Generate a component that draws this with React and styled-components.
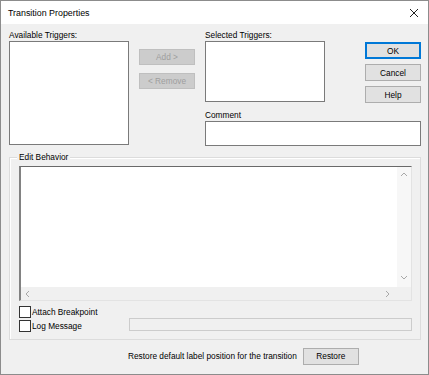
import React from 'react';
import styled, { createGlobalStyle } from 'styled-components';

const GlobalStyle = createGlobalStyle`
  html, body {
    margin: 0;
    padding: 0;
    background: #ffffff;
  }
  * {
    box-sizing: border-box;
  }
`;

function ChevronIcon({ dir }) {
    const paths = {
        up: 'M1 5 L4 2 L7 5',
        down: 'M1 2 L4 5 L7 2',
        left: 'M5 1 L2 4 L5 7',
        right: 'M2 1 L5 4 L2 7',
    };
    return (
        <svg width="8" height="8" viewBox="0 0 8 8">
            <path d={paths[dir]} fill="none" stroke="#a8a8a8" strokeWidth="1" />
        </svg>
    );
}

function App() {
    return (
        <Window>
            <GlobalStyle />
            <TitleBar>
                <span>Transition Properties</span>
                <CloseButton>
                    <svg width="10" height="10" viewBox="0 0 10 10">
                        <path d="M1 1 L9 9 M9 1 L1 9" stroke="#222" strokeWidth="1" />
                    </svg>
                </CloseButton>
            </TitleBar>
            <Body>
                <TopArea>
                    <Column width="120px">
                        <Label>Available Triggers:</Label>
                        <ListBox height="104px" />
                    </Column>
                    <ButtonColumn top="18px" gap="8px">
                        <Button disabled>Add &gt;</Button>
                        <Button disabled>&lt; Remove</Button>
                    </ButtonColumn>
                    <RightSide>
                        <RightRow>
                            <Column width="120px">
                                <Label>Selected Triggers:</Label>
                                <ListBox height="61px" />
                            </Column>
                            <ButtonColumn top="11px" gap="5px">
                                <Button primary tall>OK</Button>
                                <Button tall>Cancel</Button>
                                <Button tall>Help</Button>
                            </ButtonColumn>
                        </RightRow>
                        <CommentLabel>Comment</CommentLabel>
                        <ListBox height="25px" />
                    </RightSide>
                </TopArea>

                <Group>
                    <GroupTitle>Edit Behavior</GroupTitle>
                    <Editor>
                        <EditorMain>
                            <EditorText />
                            <VScroll>
                                <ChevronIcon dir="up" />
                                <ChevronIcon dir="down" />
                            </VScroll>
                        </EditorMain>
                        <HScroll>
                            <HTrack>
                                <ChevronIcon dir="left" />
                                <ChevronIcon dir="right" />
                            </HTrack>
                            <Corner />
                        </HScroll>
                    </Editor>
                    <Options>
                        <OptionRow>
                            <CheckLabel>
                                <CheckBox />
                                <span>Attach Breakpoint</span>
                            </CheckLabel>
                        </OptionRow>
                        <OptionRow>
                            <CheckLabel>
                                <CheckBox />
                                <span>Log Message</span>
                            </CheckLabel>
                            <DisabledField />
                        </OptionRow>
                    </Options>
                </Group>

                <Footer>
                    <FooterText>Restore default label position for the transition</FooterText>
                    <Button tall>Restore</Button>
                </Footer>
            </Body>
        </Window>
    );
}

const Window = styled.div`
    width: 429px;
    height: 375px;
    border: 1px solid #8c8c8c;
    display: flex;
    flex-direction: column;
    font-family: "Liberation Sans", Arial, sans-serif;
    font-size: 8.3px;
    color: #000;
    overflow: hidden;
`;

const TitleBar = styled.div`
    height: 23px;
    background: #ffffff;
    display: flex;
    align-items: center;
    justify-content: space-between;
    padding: 0 6px 0 7px;
    font-size: 8.9px;
    flex-shrink: 0;
`;

const CloseButton = styled.div`
    display: flex;
    align-items: center;
    justify-content: center;
    width: 16px;
    height: 16px;
`;

const Body = styled.div`
    flex: 1;
    background: #f0f0f0;
    display: flex;
    flex-direction: column;
    padding: 0 7px 0 8px;
`;

const TopArea = styled.div`
    display: flex;
    padding-top: 7px;
`;

const Column = styled.div`
    width: ${p => p.width};
    display: flex;
    flex-direction: column;
`;

const Label = styled.div`
    height: 10px;
    line-height: 8px;
    white-space: nowrap;
`;

const ListBox = styled.div`
    height: ${p => p.height};
    background: #ffffff;
    border: 1px solid #7a7a7a;
`;

const ButtonColumn = styled.div`
    width: 56px;
    margin-left: 10px;
    padding-top: ${p => p.top};
    display: flex;
    flex-direction: column;
    gap: ${p => p.gap};
`;

const Button = styled.div`
    height: ${p => (p.tall ? '17px' : '16px')};
    width: 56px;
    display: flex;
    align-items: center;
    justify-content: center;
    background: ${p => (p.disabled ? '#cccccc' : '#e1e1e1')};
    color: ${p => (p.disabled ? '#9e9e9e' : '#000')};
    border: 1px solid ${p => (p.primary ? '#0078d7' : p.disabled ? '#bfbfbf' : '#adadad')};
    box-shadow: ${p => (p.primary ? 'inset 0 0 0 1px #0078d7' : 'none')};
    white-space: nowrap;
`;

const RightSide = styled.div`
    margin-left: 10px;
    flex: 1;
    display: flex;
    flex-direction: column;
`;

const RightRow = styled.div`
    display: flex;
    justify-content: space-between;
`;

const CommentLabel = styled.div`
    margin-top: 8px;
    height: 10px;
    line-height: 8px;
`;

const Group = styled.div`
    position: relative;
    margin-top: 11px;
    border: 1px solid #dcdcdc;
    box-shadow: inset 1px 1px 0 #ffffff;
    padding: 8px 8px 7px 9px;
    display: flex;
    flex-direction: column;
`;

const GroupTitle = styled.div`
    position: absolute;
    top: -6px;
    left: 7px;
    padding: 0 2px;
    background: #f0f0f0;
    line-height: 10px;
`;

const Editor = styled.div`
    height: 135px;
    display: flex;
    flex-direction: column;
    border-top: 1px solid #696969;
    border-left: 2px solid #828282;
    border-right: 1px solid #e3e3e3;
    border-bottom: 1px solid #e3e3e3;
`;

const EditorMain = styled.div`
    flex: 1;
    display: flex;
`;

const EditorText = styled.div`
    flex: 1;
    background: #ffffff;
`;

const VScroll = styled.div`
    width: 14px;
    background: #f7f7f7;
    display: flex;
    flex-direction: column;
    justify-content: space-between;
    align-items: center;
    padding: 4px 0 5px;
`;

const HScroll = styled.div`
    height: 13px;
    display: flex;
`;

const HTrack = styled.div`
    flex: 1;
    background: #f0f0f0;
    display: flex;
    align-items: center;
    justify-content: space-between;
    padding: 0 5px 0 3px;
`;

const Corner = styled.div`
    width: 14px;
    background: #f0f0f0;
`;

const Options = styled.div`
    margin-top: 4px;
    display: flex;
    flex-direction: column;
    gap: 1px;
`;

const OptionRow = styled.div`
    display: grid;
    grid-template-columns: 110px 1fr;
    align-items: center;
    height: 13px;
`;

const CheckLabel = styled.label`
    display: flex;
    align-items: center;
    gap: 1px;
    white-space: nowrap;
`;

const CheckBox = styled.span`
    width: 12px;
    height: 12px;
    background: #ffffff;
    border: 1px solid #333333;
    display: inline-block;
`;

const DisabledField = styled.div`
    height: 13px;
    margin-top: -3px;
    background: #f0f0f0;
    border: 1px solid #cccccc;
`;

const Footer = styled.div`
    flex: 1;
    display: flex;
    align-items: center;
    padding-left: 119px;
    padding-bottom: 2px;
    gap: 6px;
`;

const FooterText = styled.span`
    white-space: nowrap;
`;

export default App;
